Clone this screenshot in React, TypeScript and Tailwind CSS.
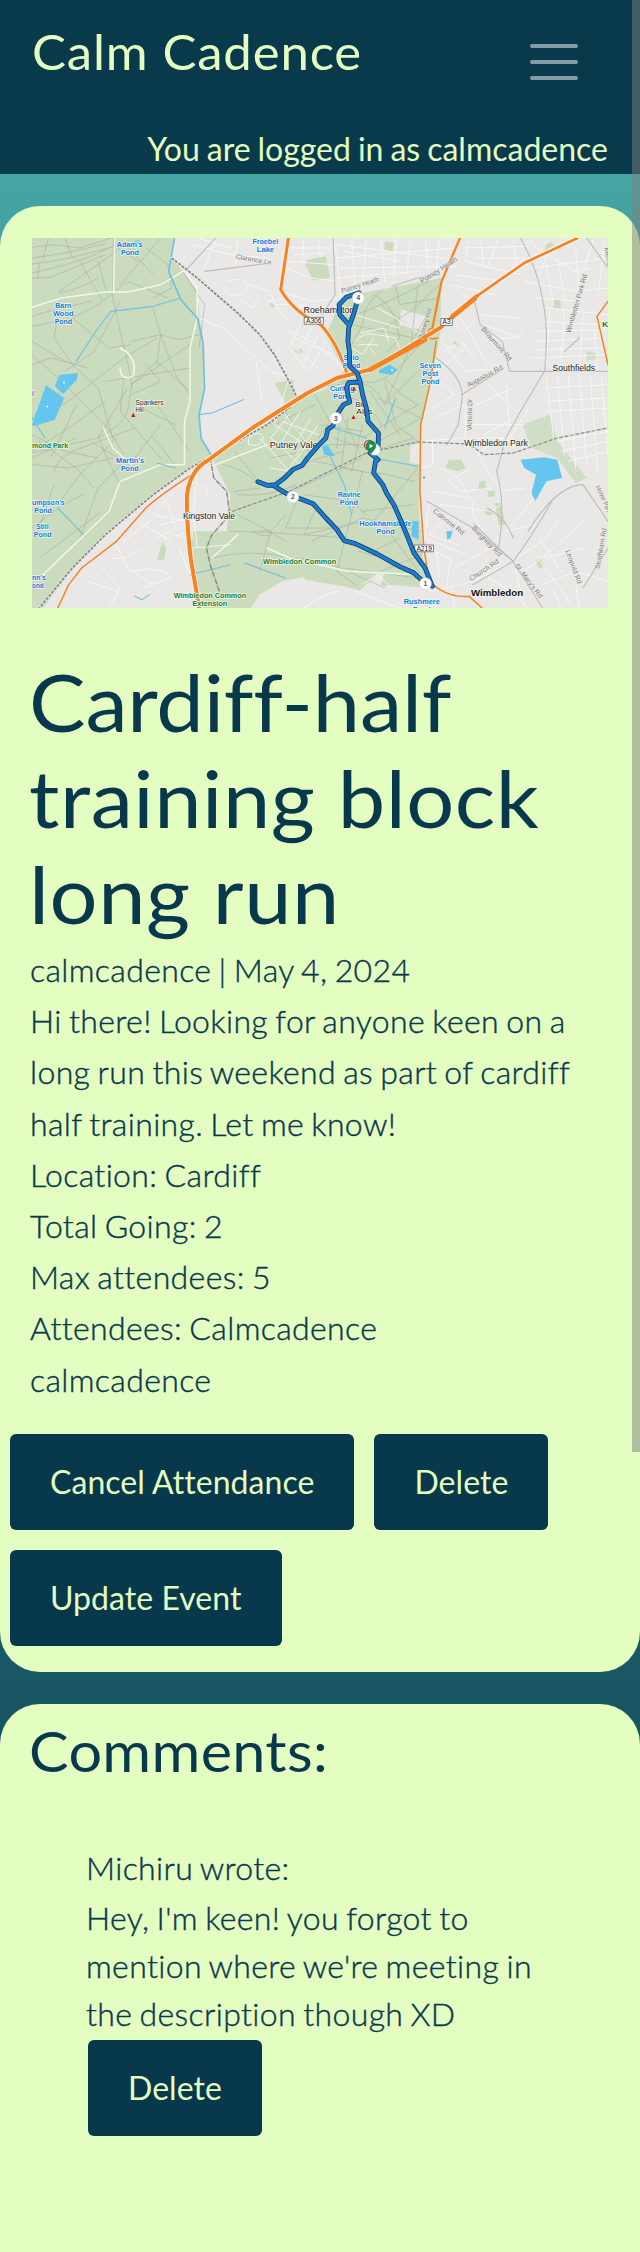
import React from "react";

const KX = 576 / 1568;
const KY = 370 / 1110;

type LabelProps = {
  x: number;
  y: number;
  w: number;
  s?: number;
  c?: string;
  b?: boolean;
  r?: number;
  halo?: number;
  children: string;
};

function Label({ x, y, w, s = 8, c, b, r = 0, halo = 1.6, children }: LabelProps) {
  const px = x * KX;
  const py = y * KY;
  const fill = c ?? "#0f7be0";
  const bold = b ?? (c === undefined || c === "#167d2a");
  return (
    <text
      x={px}
      y={py}
      transform={r ? `rotate(${r} ${px} ${py})` : undefined}
      textLength={r ? w / 3 : w * KX}
      lengthAdjust="spacingAndGlyphs"
      fontSize={s}
      fontWeight={bold ? 700 : 400}
      fill={fill}
      stroke="#f4f6f0"
      strokeWidth={halo}
      strokeLinejoin="round"
      paintOrder="stroke"
    >
      {children}
    </text>
  );
}

function Mile({ x, y, n }: { x: number; y: number; n: string }) {
  return (
    <g>
      <circle cx={x * KX} cy={y * KY} r="6" fill="#fff" stroke="#c9cdd0" strokeWidth="0.6" />
      <text x={x * KX} y={y * KY + 2.3} textAnchor="middle" fontSize="6.5" fontWeight="700" fill="#555">
        {n}
      </text>
    </g>
  );
}

function Shield({ x, y, w, children }: { x: number; y: number; w: number; children: string }) {
  return (
    <g>
      <rect x={x * KX} y={y * KY} width={w * KX} height="6.8" fill="#fff" stroke="#666" strokeWidth="0.8" />
      <text x={(x + w / 2) * KX} y={y * KY + 5.8} textAnchor="middle" fontSize="6.6" fill="#111">
        {children}
      </text>
    </g>
  );
}

const parkPaths = [
  "M0 28 L60 20 130 30 215 0 M0 60 L90 45 200 18 M0 78 Q80 70 215 28 M0 105 L60 90 150 60 240 15 M0 120 L50 118 200 50",
  "M75 160 L230 40 M75 165 Q140 150 180 120 M90 0 L110 60 M45 0 L30 60 M130 70 L190 185 M180 70 L205 170 M20 75 L15 120",
  "M222 0 L220 180 240 280 262 380 272 440 260 520 Q250 560 180 600 L0 645",
  "M0 235 L60 215 160 190 M0 265 L110 240 180 200 M70 230 L60 300 110 380 180 450 220 600 M0 310 L90 370 150 390 M0 380 L50 360 120 380 M0 350 L70 420 200 560 250 650 M0 560 L110 480 250 360 340 300",
  "M240 190 L170 340 90 400 M110 240 L210 330 270 320 M180 200 L260 130 370 180 M370 80 L380 150 330 180 M310 30 L370 80 M240 140 L350 0 M250 15 L330 110 M220 20 L290 70",
  "M410 100 L470 200 455 330 M330 210 L350 290 400 305 455 290 M270 310 L350 290 340 380 M350 290 L395 420 430 470 M270 440 L430 320",
  "M270 440 L340 370 430 460 M270 470 L350 430 310 380 M200 430 L430 390 M280 500 L390 560 M250 420 L240 520 350 660 M0 540 L110 430 M120 500 Q80 600 50 660 M180 600 L260 450",
  "M0 590 L90 640 180 660 M0 640 L100 570 200 490 M70 800 L130 710 230 600 M0 680 L100 690 220 660 M20 610 L120 690 170 750 M160 610 L280 690 M60 700 Q70 660 110 640 L280 570 M240 740 L200 650 180 590",
  "M0 870 Q90 790 140 770 M130 900 L180 750 260 660 M0 660 L120 600 M280 660 L350 560 M60 740 L10 900 M330 600 L390 680 M20 960 L190 820 M340 500 L430 640",
  "M950 160 Q900 200 900 260 L870 320 M930 170 Q990 200 1000 300 L970 340 M990 145 L1000 200 1110 180 M1020 260 L950 200 M1110 140 L1030 220 960 270 M860 240 Q960 200 1080 130 M870 260 L1040 300 1080 220 M1050 150 L1030 330 960 500 M900 430 Q960 460 1070 300",
  "M960 420 Q1000 470 1050 500 M840 430 Q930 420 960 500 L1050 400 M960 430 L990 560 1050 610 M920 460 L1000 590 M940 480 L1060 540 M900 600 L1050 500 M890 640 L830 500 M900 580 L780 560 M850 470 Q930 500 950 560",
  "M690 520 L760 650 M650 660 L740 640 M520 680 Q570 690 610 730 M550 640 L610 720 M620 750 L550 760 M560 770 Q640 780 720 740 M850 640 L720 680 M780 620 L930 620 M900 660 L690 770",
  "M540 880 Q640 880 850 900 M560 830 L630 870 690 910 M690 830 L650 880 620 1000 M720 790 L690 870 840 870 M770 820 L740 890 900 850 M900 700 L830 1000 880 1040 M740 770 L870 790 910 830 M900 820 L1040 800 M930 700 L1040 730 M840 690 L950 710 M1050 690 L930 850",
  "M950 850 L1060 1010 M850 990 L1050 1020 M600 880 Q630 900 650 890 Q660 870 620 880 M490 960 Q600 930 700 960 L800 970 L960 1050 M890 940 L980 970 M1000 900 L930 940 M950 1000 L1060 950 M830 630 L840 530 M900 630 L820 600 M1060 880 L900 840 760 910",
  "M760 450 L900 430 M770 470 L810 550 780 600 M660 560 L770 500 M900 560 L870 700 M860 540 L840 700 M900 650 L1040 600 M925 620 L1060 540 M900 700 L770 670",
];

const streets = [
  "M440 20 L540 50 640 60 M500 0 L470 90 M450 0 L540 30 M560 0 L555 80 M690 90 L760 120 830 130 M700 70 L820 80 M740 0 L735 80 M780 0 L785 55 M700 30 L830 30 M715 50 L800 45",
  "M530 130 Q600 110 580 160 Q540 190 520 150 M590 140 L650 160 660 200 740 200 M620 170 L600 210 560 180 M660 200 L700 250 M690 165 L760 190 830 180 M705 200 L770 215 M720 230 L760 170 M640 190 L690 180",
  "M455 240 L520 270 650 400 700 420 660 560 M610 370 L625 480 M700 280 L760 310 840 380 M730 260 L700 330 750 400 M760 270 L720 350 M780 290 L740 370 M800 310 L760 390 M715 300 L820 350 M715 330 L790 400",
  "M820 0 L830 60 1150 30 M830 20 L1150 65 M840 90 L1160 85 M870 0 L880 145 M910 0 L900 140 M950 0 L960 130 M990 0 L985 120 M1030 0 L1020 110 M1070 0 L1080 100 M1110 0 L1100 95 M830 60 L840 180 M830 120 L1050 100 M850 40 L1000 70",
  "M1190 0 L1180 70 1330 110 M1220 0 L1230 90 M1270 0 L1240 90 M1180 30 L1350 25 M1200 60 L1380 60 M1310 0 L1320 100 M1150 110 L1280 130 M1160 160 L1200 190 M1140 140 L1260 170 M1390 40 L1480 100 1520 90 M1350 0 L1400 60 1380 110",
  "M1400 80 L1420 200 M1430 60 L1450 180 M1480 30 L1490 160 M1530 0 L1500 100 M1560 0 L1540 180 M1340 130 L1480 160 1568 150 M1360 90 L1568 60 M1370 180 L1500 190 M1400 210 L1568 230 M1390 250 L1540 260",
  "M1380 280 L1560 275 M1370 310 L1560 300 M1370 335 L1560 330 M1360 360 L1560 350 M1410 210 L1400 380 M1450 220 L1440 370 M1500 230 L1490 400 M1530 280 L1540 400 M1210 230 L1330 240 M1230 260 L1330 300 M1240 290 Q1300 320 1340 280",
  "M1110 300 L1180 400 1290 390 M1120 340 L1170 310 1210 370 M1115 390 L1180 330 M1150 210 L1200 300 1240 380 M1110 240 L1180 280 1200 250 M1100 420 L1150 470 1090 510 M1090 540 L1180 500 1180 600 M1210 500 L1310 450 M1240 440 L1330 530 1230 590 M1200 560 L1340 560",
  "M1290 430 L1300 570 M1210 600 L1300 600 1360 500 M1400 420 L1420 600 M1430 420 L1450 650 M1460 415 L1480 690 M1490 415 L1510 680 M1520 415 L1540 700 M1550 415 L1568 650 M1400 450 L1568 440 M1400 490 L1568 480 M1400 520 L1568 510 M1430 610 L1568 580 M1440 640 L1568 610 M1460 670 L1568 640",
  "M1060 610 L1170 600 M1090 600 L1090 680 1060 690 M1110 690 Q1170 710 1190 780 L1090 760 M1190 600 L1240 700 1280 760 1340 750 M1220 640 L1280 600 M1180 700 L1130 730 1170 760 1250 750 M1080 800 L1070 900 1180 950 M1110 800 L1250 820 1290 790",
  "M1210 780 Q1180 820 1230 880 M1110 860 L1080 890 1160 920 M1150 990 L1230 940 1290 880 1370 860 M1300 870 L1390 750 M1340 1000 L1420 930 1500 850 M1380 900 L1440 1000 M1320 960 L1400 900 1430 850 M1100 940 L1110 1020 M1070 930 L1140 960 1130 1040",
  "M1090 1060 L1200 1030 1290 980 M1140 1050 L1150 1110 M1220 1000 L1300 1060 1350 1110 M1390 1040 L1480 1000 1568 1030 M1420 1060 L1440 1110 M1480 1040 L1490 1110 M1400 960 L1500 930 M1310 960 L1340 1110 M1370 950 L1470 1100",
  "M450 700 L440 830 450 930 M400 740 L330 830 420 850 M370 800 L390 870 340 900 M290 850 L380 910 M230 920 L260 990 330 1040 M270 1000 Q350 980 380 1020 L300 1050 M210 960 Q260 970 300 930 M150 1030 L230 1060 M380 890 L440 900 M400 930 L430 1010",
  "M450 830 L400 900 M350 860 L430 840 M440 930 L540 920 M470 740 Q490 760 460 790 M330 840 L250 910 M190 990 L240 1050 210 1110 M900 1040 L940 1010 980 1050 M880 1060 L1000 1110 M740 1110 Q800 1060 840 1060",
  "M690 530 L750 620 700 690 M660 560 L770 640 M650 600 L740 690 M700 530 L650 600 M730 520 L680 610 M760 540 L710 630 M780 560 L720 650 M680 550 L780 590 M620 600 L700 700 650 690 M590 600 Q620 570 630 600 Q620 630 590 620 Z",
  "M880 310 Q900 280 940 290 L990 300 1000 330 M870 330 L900 350 930 300 M895 285 L960 270 970 310 M920 330 L935 350 M890 320 L940 320 M940 210 L990 240 1060 290 M880 230 L1000 270",
];

const minor = [
  "M820 0 L825 170 790 230 M1205 190 L1220 260 1280 310 1300 400 1568 400 M1330 0 Q1420 180 1395 400 L1330 520 1290 600 1265 700 Q1290 800 1270 930 L1310 970",
  "M1100 360 Q1180 420 1170 490 L1160 560 1130 620 M1170 470 L1285 390 M1075 790 L1200 870 1310 970 1390 1110 M1310 970 L1200 1040 M1205 860 L1270 930 M1350 880 Q1430 740 1500 740 L1568 850 M1310 970 Q1370 880 1420 780",
  "M470 100 L650 75 M980 145 L1050 120 1110 110 M420 95 L500 0 M1240 810 Q1290 840 1310 900 M1510 0 L1568 90 M1450 340 L1490 300 M1500 1050 L1568 930",
];

const route =
  "M1090 1045 L1070 990 1040 945 1020 890 1005 850 985 800 965 765 955 740 930 705 935 670 942 665 920 645 M942 635 L943 585 915 550 910 510 900 470 893 430 885 405 865 385 864 340 860 310 862 270 875 230 888 180 M864 262 L838 230 836 200 855 178 890 164 M890 432 L862 434 856 450 865 492 848 500 830 530 820 562 805 575 800 600 780 622 750 660 735 683 710 695 685 722 662 741 640 742 615 731 M655 741 L690 765 730 782 765 797 800 840 830 875 850 908 880 917 940 948 1000 985 1040 1005 1060 1025";

function EventMap() {
  const river = "#6fbfe4";
  return (
    <svg
      className="block h-[370px] w-[576px]"
      viewBox="0 0 576 370"
      fontFamily="'Liberation Sans', Arial, sans-serif"
      role="img"
      aria-label="Route map"
    >
      <rect width="576" height="370" fill="#e9e8e6" />
      <g
        transform={`scale(${KX} ${KY})`}
        fill="none"
        strokeLinecap="round"
        strokeLinejoin="round"
        className="[&_path]:[vector-effect:non-scaling-stroke]"
      >
        <g fill="#cadcbd">
          <path d="M0 0 L385 0 378 60 412 100 450 160 455 230 470 330 470 450 455 530 460 600 490 655 440 690 330 770 200 890 110 990 30 1110 0 1110 Z" />
          <path d="M490 660 L600 590 740 480 860 425 750 470 780 440 850 400 800 290 840 190 900 165 1115 120 1110 300 1060 560 1052 800 1068 1000 1085 1050 980 1040 900 1060 850 1045 740 1025 700 1055 660 1110 455 1110 430 930 440 880 530 880 540 770 Z" />
          <path d="M750 65 L800 55 812 120 765 128 745 80 Z M660 435 L710 425 720 475 690 495 Z M960 12 L985 14 982 40 960 38 Z M1400 18 L1415 12 1425 35 1395 40 Z M1418 185 L1438 183 1440 212 1420 210 Z" />
          <path d="M1335 560 L1410 530 1430 610 1510 720 1480 735 1430 660 1360 630 Z M1508 340 L1538 345 1540 362 1510 368 Z" opacity=".85" />
          <path d="M1370 965 L1385 960 1395 985 1380 992 Z M355 910 L365 930 360 965 340 965 Z M1145 310 L1165 315 1160 325 1148 320 Z M1135 665 L1170 665 1180 690 1160 700 1125 690 Z M1218 730 L1235 730 1235 755 1215 755 Z M1240 760 L1260 760 1260 775 1242 778 Z M1260 795 L1275 795 1290 860 1270 860 Z M1230 815 L1250 812 1255 830 1235 832 Z M715 335 L735 330 735 345 720 350 Z M650 195 L662 200 658 210 648 205 Z" />
        </g>
        <path d="M1005 215 L1075 235 1060 275 1000 260 Z M1030 620 L1058 615 1058 680 1028 675 Z" fill="#e9e8e6" />
        <path d="M595 1110 L620 1070 680 1030 740 1018 760 1050 740 1078 660 1110 Z M890 1060 L940 1010 960 1000 950 1040 1000 1070 1010 1110 880 1110 Z" fill="#e9e8e6" />
        <g stroke="#a9aaa6" strokeWidth="0.65" opacity=".85">
          {parkPaths.map((d, i) => (
            <path key={i} d={d} />
          ))}
        </g>
        <g stroke="#fafafa" strokeWidth="1" opacity=".85">
          {streets.map((d, i) => (
            <path key={i} d={d} />
          ))}
        </g>
        <g stroke="#bcbcbc" strokeWidth="1.1">
          {minor.map((d, i) => (
            <path key={i} d={d} />
          ))}
        </g>
        <g stroke="#f3f7ea" strokeWidth="1.5">
          <path d="M0 208 L80 180 200 162 260 162 350 140 415 98 M415 98 L450 150 450 240 430 330 430 490 415 550 415 680 350 680 240 730 210 820 30 1010" />
          <path d="M225 0 L222 165 M240 330 Q290 360 275 415 Q240 430 240 390 M195 570 L220 630 270 680 M500 680 L640 620 M490 960 L560 890 M1058 1010 L860 1000 700 960 640 930" />
        </g>
        <g stroke={river} strokeWidth="1.1">
          <path d="M388 0 L372 100 405 185 450 240 465 310 470 450 455 530 460 600 490 655" strokeWidth="1.6" />
          <path d="M405 180 L330 205 215 220 180 270 120 370 M455 530 L490 525 575 485 M0 540 L35 600 M70 810 L140 890 M430 1010 L540 980 M580 975 L640 1000 690 1020 M280 1075 L300 1085 320 1070 M805 640 L850 740 870 830 M820 570 L910 600 M930 660 L1050 685 M990 480 L960 570 M340 675 L390 690" />
        </g>
        <g fill="#64c5ef">
          <path d="M75 410 L125 405 122 425 85 468 62 445 Z M38 442 L88 480 62 545 5 565 0 560 Z" />
          <path d="M1330 665 L1395 658 1430 665 1443 720 1400 730 1370 790 1360 765 1372 710 1340 690 Z" />
          <path d="M945 395 L975 380 995 395 980 410 945 405 Z M790 625 L805 622 825 655 795 650 Z M1035 850 L1052 850 1052 905 1033 895 Z M1128 880 L1145 878 1140 900 1130 905 Z M268 15 L290 5 300 20 Z" />
        </g>
        <path
          d="M380 60 L450 120 560 225 620 290 660 350 700 430 722 480 700 510 640 560 560 610 480 660 430 690 330 770 200 890 110 990 20 1110"
          stroke="#fff"
          strokeWidth="2.2"
        />
        <g stroke="#8b8b8b" strokeLinecap="butt">
          <path
            d="M380 60 L450 120 560 225 620 290 660 350 700 430 722 480 700 510 640 560 560 610 480 660 430 690 330 770 200 890 110 990 20 1110"
            strokeWidth="1.9"
            strokeDasharray="3.2 1"
          />
          <path d="M485 660 L495 720 530 760 538 830 490 890 475 930 485 980 510 1060" strokeWidth="1.5" strokeDasharray="5 1 1 1" />
          <path d="M545 820 L700 760 910 645 1050 612 1190 618 1230 650 1310 645 1430 600 1568 570" strokeWidth="1.2" strokeDasharray="4 1.5" />
        </g>
        <g stroke="#f58223">
          <path d="M698 0 L677 155 Q700 200 745 235 L785 260 Q830 310 860 415" strokeWidth="4.6" stroke="#f8f4ec" />
          <path d="M698 0 L677 155 Q700 200 745 235 L785 260 Q830 310 860 415" strokeWidth="3" />
          <path d="M1165 0 L1115 130 1090 270" strokeWidth="2.2" />
          <path d="M1105 300 Q1070 310 1078 280 Q1090 260 1100 280 M1100 310 L1085 430 1058 560 1056 760 1066 920 1080 1030 1110 1055 Q1150 1080 1190 1075 L1225 1110" strokeWidth="1.5" />
          <path d="M435 710 Q350 770 310 810 L230 910 135 990 100 1040 70 1110" strokeWidth="1.4" />
          <path d="M1568 190 L1538 235 1568 380" strokeWidth="1.5" />
          <path d="M1485 0 L1340 75 1210 175 1110 270 1000 345 920 395 830 420 750 465 600 570 475 670 Q430 700 422 770 Q420 850 432 960 L455 1110" strokeWidth="5.6" stroke="#f8f4ec" />
          <path d="M1485 0 L1340 75 1210 175" strokeWidth="2.6" />
          <path d="M1210 175 L1110 270 1000 345 920 395 830 420 750 465 600 570 475 670 Q430 700 422 770 Q420 850 432 960 L455 1110" strokeWidth="4" />
          <path d="M1205 182 L1145 235 M1070 305 L920 395" strokeWidth="4.8" />
        </g>
      </g>

      <Label x={231} y={28} w={70}>Adam's</Label>
      <Label x={242} y={52} w={49}>Pond</Label>
      <Label x={600} y={18} w={70}>Froebel</Label>
      <Label x={612} y={41} w={47}>Lake</Label>
      <Label x={63} y={209} w={44}>Barn</Label>
      <Label x={57} y={233} w={56}>Wood</Label>
      <Label x={62} y={257} w={47}>Pond</Label>
      <Label x={229} y={676} w={76}>Martin's</Label>
      <Label x={242} y={700} w={48}>Pond</Label>
      <Label x={0} y={801} w={89}>umpson's</Label>
      <Label x={6} y={825} w={48}>Pond</Label>
      <Label x={11} y={872} w={34}>Still</Label>
      <Label x={5} y={896} w={48}>Pond</Label>
      <Label x={0} y={1027} w={38}>nn's</Label>
      <Label x={0} y={1050} w={32}>ond</Label>
      <Label x={0} y={475} w={5}>l</Label>
      <Label x={848} y={366} w={42}>Scio</Label>
      <Label x={846} y={390} w={48}>Pond</Label>
      <Label x={811} y={458} w={67}>Curling</Label>
      <Label x={820} y={482} w={48}>Pond</Label>
      <Label x={1055} y={391} w={58}>Seven</Label>
      <Label x={1063} y={414} w={43}>Post</Label>
      <Label x={1060} y={438} w={49}>Pond</Label>
      <Label x={832} y={777} w={63}>Ravine</Label>
      <Label x={838} y={801} w={49}>Pond</Label>
      <Label x={891} y={863} w={142}>Hookhamslade</Label>
      <Label x={938} y={887} w={49}>Pond</Label>
      <Label x={1012} y={1097} w={98}>Rushmere</Label>
      <Label x={1037} y={1121} w={48}>Pond</Label>
      <Label x={0} y={629} w={98} c="#167d2a">mond Park</Label>
      <Label x={629} y={979} w={199} c="#167d2a">Wimbledon Common</Label>
      <Label x={386} y={1080} w={197} c="#167d2a">Wimbledon Common</Label>
      <Label x={437} y={1104} w={94} c="#167d2a">Extension</Label>
      <Label x={1552} y={266} w={24} c="#167d2a">Ki</Label>

      <Label x={282} y={500} w={76} s={7} c="#222">Spankers</Label>
      <Label x={282} y={521} w={22} s={7} c="#222">Hill</Label>
      <Label x={880} y={506} w={30} s={7.4} c="#222">Big</Label>
      <Label x={883} y={527} w={44} s={7.4} c="#222">Alps</Label>
      <Label x={739} y={224} w={139} s={9} c="#222">Roehampton</Label>
      <Label x={647} y={630} w={130} s={9} c="#222">Putney Vale</Label>
      <Label x={411} y={844} w={142} s={9} c="#222">Kingston Vale</Label>
      <Label x={1177} y={625} w={173} s={9} c="#222">Wimbledon Park</Label>
      <Label x={1417} y={398} w={116} s={9} c="#222">Southfields</Label>
      <Label x={1195} y={1073} w={142} s={9.6} c="#111" b>Wimbledon</Label>

      <Label x={554} y={62} w={108} s={6.8} c="#777" r={10} halo={0.6}>Clarence Ln</Label>
      <Label x={844} y={166} w={118} s={7} c="#777" r={-18} halo={0.6}>Putney Heath</Label>
      <Label x={1062} y={137} w={128} s={7} c="#777" r={-33} halo={0.6}>Putney Heath</Label>
      <Label x={1064} y={305} w={96} s={7} c="#777" r={-73} halo={0.6}>Putney Hill</Label>
      <Label x={1222} y={274} w={128} s={7} c="#777" r={49} halo={0.6}>Beaumont Rd</Label>
      <Label x={1188} y={448} w={118} s={7} c="#777" r={-28} halo={0.6}>Augustus Rd</Label>
      <Label x={1466} y={286} w={182} s={7} c="#777" r={-74} halo={0.6}>Wimbledon Park Rd</Label>
      <Label x={1197} y={578} w={96} s={7} c="#777" r={-89} halo={0.6}>Victoria Dr</Label>
      <Label x={1090} y={822} w={113} s={7} c="#777" r={38} halo={0.6}>Calonne Rd</Label>
      <Label x={1196} y={872} w={118} s={7} c="#777" r={46} halo={0.6}>Burghley Rd</Label>
      <Label x={1196} y={1030} w={101} s={7} c="#777" r={-34} halo={0.6}>Church Rd</Label>
      <Label x={1313} y={983} w={124} s={7} c="#777" r={53} halo={0.6}>St. Mary's Rd</Label>
      <Label x={1452} y={939} w={106} s={7} c="#777" r={70} halo={0.6}>Leopold Rd</Label>
      <Label x={1534} y={746} w={118} s={7} c="#777" r={66} halo={0.6}>Home Park Rd</Label>
      <Label x={1545} y={994} w={124} s={7} c="#777" r={-80} halo={0.6}>Strathearn Rd</Label>
      <Label x={1558} y={30} w={66} s={7} c="#777" r={80} halo={0.6}>Merton</Label>

      <Shield x={741} y={238} w={52}>A306</Shield>
      <Shield x={1113} y={242} w={31}>A3</Shield>
      <Shield x={1042} y={921} w={51}>A219</Shield>

      <g fill="#d2141c">
        <path d="M101.300 174.800 L103.300 179 L99.300 179 Z" />
        <path d="M322 148.500 L324 152.500 L320 152.500 Z" />
        <path d="M321.500 177 L323.500 181 L319.500 181 Z" />
      </g>
      <g fill="#fff">
        <circle cx="32" cy="144.500" r="0.9" />
        <circle cx="15.300" cy="168.500" r="0.9" />
        <circle cx="360" cy="132" r="0.9" />
      </g>
      <circle cx="392" cy="239.500" r="1" fill="#16a79b" />

      <g transform={`scale(${KX} ${KY})`} fill="none" strokeLinecap="round" strokeLinejoin="round">
        <path d={route} stroke="#143b62" strokeWidth="4.800" vectorEffect="non-scaling-stroke" />
        <path d={route} stroke="#1a7bd0" strokeWidth="3.200" vectorEffect="non-scaling-stroke" />
      </g>
      <Mile x={888} y={180} n="4" />
      <Mile x={827} y={541} n="3" />
      <Mile x={710} y={777} n="2" />
      <Mile x={1071} y={1037} n="1" />
      <circle cx="342.500" cy="211.500" r="5.800" fill="#fff" stroke="#c9cdd0" strokeWidth="0.6" />
      <circle cx="337" cy="207" r="4.600" fill="none" stroke="#d8393f" strokeWidth="1.200" />
      <path d="M338.800 215.800 C335.500 212 334 210.500 334 208 A4.900 4.900 0 0 1 343.800 208 C343.800 210.500 342 212 338.800 215.800 Z" fill="#159048" stroke="#0c7a3a" strokeWidth="0.5" />
      <path d="M337.500 205.800 L341.300 208 L337.500 210.200 Z" fill="#fff" />
    </svg>
  );
}

function Button({ children }: { children: string }) {
  return (
    <button className="h-24 rounded-[6px] bg-[#08384b] px-10 text-[32px] font-normal leading-[48px] tracking-[0.05px] text-[#e4fdc1] [-webkit-text-stroke:0px] [word-spacing:0px]">
      {children}
    </button>
  );
}

const details = [
  "calmcadence | May 4, 2024",
  "Hi there! Looking for anyone keen on a",
  "long run this weekend as part of cardiff",
  "half training. Let me know!",
  "Location: Cardiff",
  "Total Going: 2",
  "Max attendees: 5",
  "Attendees: Calmcadence",
  "calmcadence",
];

export default function App() {
  return (
    <div className="relative h-[2252px] w-[640px] overflow-hidden bg-[linear-gradient(to_bottom,#45a5a3_174px,#175562_1700px)] font-['Lato',sans-serif] text-[#08384b] [font-variant-ligatures:none]">
      <header className="flex h-[174px] flex-col bg-[#083a4b] text-[#e4fdc1]">
        <div className="flex h-[125px] items-start justify-between pl-8 pr-[62px]">
          <h1 className="mt-[23px] origin-left scale-x-[1.06] whitespace-nowrap text-[48px] leading-[58px] tracking-[0.8px]">
            Calm Cadence
          </h1>
          <button className="mt-11 flex w-12 flex-col gap-3" aria-label="Menu">
            <span className="h-1 w-full rounded-full bg-[#839ca5]" />
            <span className="h-1 w-full rounded-full bg-[#839ca5]" />
            <span className="h-1 w-full rounded-full bg-[#839ca5]" />
          </button>
        </div>
        <p className="pr-8 text-right text-[32px] leading-[50px] [word-spacing:-1.2px]">You are logged in as calmcadence</p>
      </header>

      <main className="mt-8 flex flex-col gap-8">
        <article className="h-[1466px] rounded-[40px] bg-[#e4fdc1] pt-8">
          <div className="px-8">
            <EventMap />
          </div>
          <h2 className="ml-[29px] mt-[45px] flex origin-left scale-x-[1.06] flex-col whitespace-nowrap text-[80px] leading-[96px]">
            <span className="tracking-[-0.2px]">Cardiff-half</span>
            <span className="tracking-[0.5px]">training block</span>
            <span className="tracking-[0.5px]">long run</span>
          </h2>
          <div className="mt-[3px] whitespace-nowrap pl-[30px] text-[32px] font-light leading-[51.2px] tracking-[0.36px] [-webkit-text-stroke:0.4px_#08384b] [word-spacing:-1.8px]">
            {details.map((d, i) => (
              <p key={i}>{d}</p>
            ))}
          </div>
          <div className="mt-[29px] flex flex-wrap gap-5 px-2.5">
            <Button>Cancel Attendance</Button>
            <Button>Delete</Button>
            <Button>Update Event</Button>
          </div>
        </article>

        <section className="h-[620px] rounded-[40px] bg-[#e4fdc1] pt-[13px]">
          <h3 className="ml-[29px] origin-left scale-x-[1.06] whitespace-nowrap text-[56px] leading-[68px] tracking-[0.3px]">
            Comments:
          </h3>
          <div className="mt-[59px] pl-[86px] text-[32px] font-light leading-[48px] tracking-[0.36px] [-webkit-text-stroke:0.4px_#08384b] [word-spacing:-1.8px]">
            <p className="mb-0.5">Michiru wrote:</p>
            <p className="w-[460px]">Hey, I'm keen! you forgot to mention where we're meeting in the description though XD</p>
            <div className="ml-0.5 mt-0.5 flex">
              <Button>Delete</Button>
            </div>
          </div>
        </section>
      </main>
      <div className="absolute right-0 top-0 h-[1452px] w-2 bg-[#808080]/50" />
    </div>
  );
}
